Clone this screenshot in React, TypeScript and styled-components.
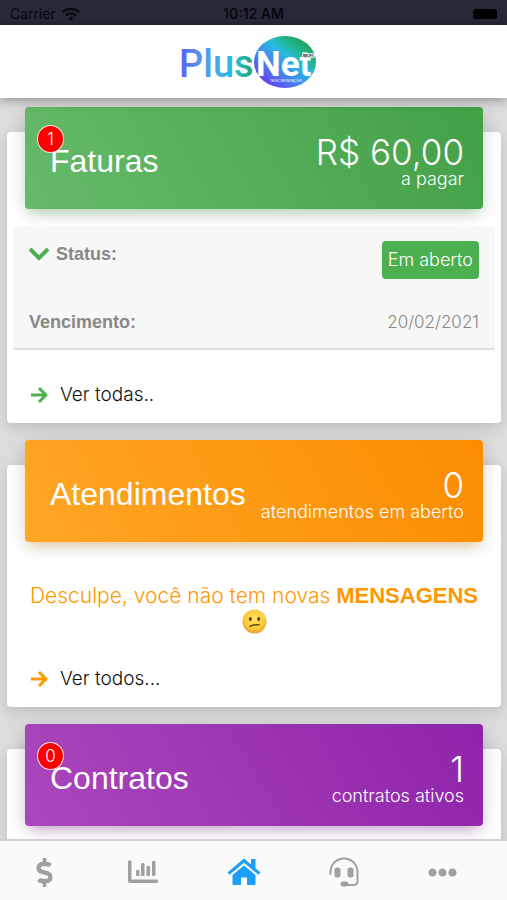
import React from "react";
import styled, { createGlobalStyle } from "styled-components";
import { FaDollarSign, FaEllipsisH, FaWifi } from "react-icons/fa";

const sans = `"Liberation Sans", Arial, sans-serif`;
const light = `Inter, "Liberation Sans", sans-serif`;

const GlobalStyle = createGlobalStyle`
  *, *::before, *::after { box-sizing: border-box; }
  body { margin: 0; font-family: ${sans}; background: #dcdcdc; }
  h1, h2, p, dl, dt, dd { margin: 0; font-weight: 400; }
  button { border: 0; background: none; padding: 0; font: inherit; cursor: pointer; }
`;

const Screen = styled.div`
  height: 100vh;
  display: flex;
  flex-direction: column;
  overflow: hidden;
`;

const StatusBar = styled.div`
  flex: none;
  height: 25px;
  padding: 2px 10px 0;
  display: grid;
  grid-template-columns: 1fr auto 1fr;
  align-items: center;
  background: #272838;
  color: #080810;
  font: 500 14px/16px Inter, sans-serif;
`;

const Carrier = styled.span`
  display: flex;
  align-items: center;
  gap: 6px;
  font-weight: 400;
`;

const Clock = styled.time`
  font-weight: 600;
`;

const Battery = styled.span`
  justify-self: end;
  width: 24px;
  height: 10px;
  border-radius: 3px;
  background: #000;
`;

const TopBar = styled.header`
  flex: none;
  position: relative;
  z-index: 2;
  height: 73px;
  display: flex;
  justify-content: center;
  align-items: center;
  background: #fff;
  box-shadow: 0 2px 10px rgba(0, 0, 0, 0.35);
`;

const Content = styled.main`
  flex: 1;
  min-height: 0;
  overflow: hidden;
  padding: 34px 6px 0 7px;
  display: flex;
  flex-direction: column;
  gap: 42px;
`;

const Card = styled.section`
  flex: none;
  padding-bottom: 8px;
  border-radius: 4px;
  background: #fff;
  box-shadow: 0 4px 14px rgba(0, 0, 0, 0.14);
`;

const tones = {
  green: { from: "#66bb6a", to: "#43a047", glow: "rgba(76, 175, 80, 0.35)", accent: "#4caf50" },
  orange: { from: "#ffa726", to: "#fb8c00", glow: "rgba(255, 152, 0, 0.35)", accent: "#ff9800" },
  purple: { from: "#ab47bc", to: "#8e24aa", glow: "rgba(156, 39, 176, 0.35)", accent: "#9c27b0" },
};
type Tone = keyof typeof tones;

const Banner = styled.div<{ $tone: Tone }>`
  position: relative;
  height: 102px;
  margin: -25px 18px 0;
  padding: 0 19px 0 25px;
  display: flex;
  justify-content: space-between;
  align-items: center;
  border-radius: 4px;
  color: #fff;
  background: linear-gradient(60deg, ${(p) => tones[p.$tone].from}, ${(p) => tones[p.$tone].to});
  box-shadow: 0 4px 20px rgba(0, 0, 0, 0.14), 0 7px 12px -5px ${(p) => tones[p.$tone].glow};
`;

const Title = styled.h2`
  padding-top: 6px;
  font-size: 32px;
  line-height: 36px;
`;

const Badge = styled.span`
  position: absolute;
  left: 12px;
  top: 18px;
  width: 27px;
  height: 28px;
  border: 1px solid #ffe0e0;
  border-radius: 50%;
  background: #f00;
  text-align: center;
  font: 300 17px/26px ${light};
`;

const Figure = styled.p`
  padding-top: 6px;
  text-align: right;
  font-family: ${light};
  font-weight: 300;
`;

const Amount = styled.strong`
  display: block;
  font-size: 35px;
  font-weight: 300;
  line-height: 36px;
`;

const Caption = styled.span`
  display: block;
  font-size: 18px;
  line-height: 18px;
`;

const Details = styled.dl`
  margin: 18px 6px 0;
  padding: 0 16px;
  border-bottom: 2px solid #dedede;
  background: #f7f7f7;
  color: #888;
`;

const DetailRow = styled.div<{ $tall?: boolean }>`
  min-height: ${(p) => (p.$tall ? "66px" : "55px")};
  padding-top: ${(p) => (p.$tall ? "14px" : "16px")};
  display: flex;
  justify-content: space-between;
  align-items: flex-start;
`;

const Term = styled.dt`
  display: flex;
  align-items: center;
  gap: 7px;
  font-size: 18px;
  font-weight: 700;
  line-height: 26px;
`;

const Value = styled.dd`
  font: 300 17px/26px ${light};
`;

const Pill = styled.span`
  display: block;
  padding: 6px;
  border-radius: 4px;
  background: #4caf50;
  color: #fff;
  font-size: 18px;
`;

const Notice = styled.p`
  padding: 40px 16px 0;
  text-align: center;
  color: #ff9800;
  font: 300 21px/27px ${light};

  strong {
    font-family: ${sans};
    font-size: 22px;
    font-weight: 700;
  }
`;

const Emoji = styled.svg`
  display: block;
  margin: 0 auto;
`;

const MoreLink = styled.a`
  height: 40px;
  margin: 25px 22px 0;
  display: flex;
  align-items: center;
  gap: 9px;
  color: #111;
  text-decoration: none;
  font: 300 19px/24px ${light};
`;

const TabBar = styled.nav`
  flex: none;
  position: relative;
  z-index: 2;
  height: 61px;
  padding: 3px 50px 0 30px;
  display: flex;
  justify-content: space-between;
  border-top: 2px solid #d0d0d0;
  background: #fafafa;
`;

const Tab = styled.button<{ $active?: boolean }>`
  display: flex;
  justify-content: center;
  align-items: center;
  color: ${(p) => (p.$active ? "#1a9ffa" : "#a0a0a0")};
`;

const Logo = () => (
  <svg width="150" height="54" viewBox="0 0 150 54" role="img" aria-label="PlusNet">
    <defs>
      <linearGradient id="plus" x1="0" y1="0" x2="1" y2="0">
        <stop offset="0" stopColor="#5560f0" />
        <stop offset="0.3" stopColor="#5898ee" />
        <stop offset="0.68" stopColor="#2bb9e4" />
        <stop offset="0.8" stopColor="#28bcc0" />
        <stop offset="1" stopColor="#1fa35b" />
      </linearGradient>
      <linearGradient id="globe" x1="0.15" y1="0.95" x2="0.9" y2="0.15">
        <stop offset="0" stopColor="#6a35f2" />
        <stop offset="0.3" stopColor="#4d78ee" />
        <stop offset="0.62" stopColor="#27bbe2" />
        <stop offset="0.8" stopColor="#20b58d" />
        <stop offset="1" stopColor="#1f9f55" />
      </linearGradient>
    </defs>
    <ellipse cx="106" cy="27" rx="31" ry="26" fill="url(#globe)" />
    <g fontFamily="Roboto, sans-serif">
      <text x="0" y="42" fontSize="38" fontWeight="500" fill="url(#plus)">Plus</text>
      <text x="77" y="41" fontSize="35" fontWeight="700" fill="#fff">Net</text>
    </g>
    <rect x="123" y="18" width="13" height="5" rx="2" fill="#ddd" />
    <text x="124" y="22" fontFamily="Liberation Sans, sans-serif" fontSize="4" fontWeight="700" fill="#333">WI-FI</text>
    <text x="91" y="47" fontFamily="Liberation Sans, sans-serif" fontSize="3" fill="#fff">TELECOMUNICAÇÕES</text>
  </svg>
);

const Chevron = () => (
  <svg width="20" height="14" viewBox="0 0 20 14" fill="none" stroke="#4caf50" strokeWidth="4" aria-hidden="true">
    <path d="M1 2l9 9 9-9" />
  </svg>
);

const Arrow = ({ tone }: { tone: Tone }) => (
  <svg width="22" height="20" viewBox="0 0 22 20" fill="none" stroke={tones[tone].accent} strokeWidth="3" strokeLinejoin="round" aria-hidden="true">
    <path d="M2 10h15M10 3l7 7-7 7" />
  </svg>
);

const Confused = () => (
  <Emoji width="25" height="25" viewBox="0 0 24 24" role="img" aria-label="rosto confuso">
    <defs>
      <radialGradient id="face" cx="0.5" cy="0.4" r="0.6">
        <stop offset="0" stopColor="#ffe658" />
        <stop offset="0.7" stopColor="#fbc93a" />
        <stop offset="1" stopColor="#ea9a24" />
      </radialGradient>
    </defs>
    <circle cx="12" cy="12" r="11.5" fill="url(#face)" />
    <ellipse cx="8" cy="9.5" rx="1.4" ry="1.9" fill="#5b3a0c" />
    <ellipse cx="16" cy="9.5" rx="1.4" ry="1.9" fill="#5b3a0c" />
    <path d="M7.5 16.7c2.5-1.5 5-1.9 9-1.5" fill="none" stroke="#6b430c" strokeWidth="1.3" strokeLinecap="round" />
  </Emoji>
);

const Chart = () => (
  <svg width="30" height="24" viewBox="0 0 30 24" fill="currentColor" aria-hidden="true">
    <path d="M0 1.500a1 1 0 0 1 1-1h1.500a1 1 0 0 1 1 1V19.500H29a1 1 0 0 1 1 1V22a1 1 0 0 1-1 1H2a2 2 0 0 1-2-2z" />
    <rect x="8" y="10" width="3.5" height="6" rx="1" />
    <rect x="13" y="3" width="3.5" height="13" rx="1" />
    <rect x="18.5" y="6" width="3.5" height="10" rx="1" />
    <rect x="24" y="1" width="3.5" height="15" rx="1" />
  </svg>
);

const House = () => (
  <svg width="34" height="28" viewBox="0 0 34 28" fill="currentColor" aria-hidden="true">
    <path d="M17 0.5L0.5 14.5l2 2.3L17 4.700l14.500 12.100 2-2.300-5-4.200V1h-4.500v5.500z" />
    <path d="M17 7.500L5.500 17v9q0 1 1 1h7.500v-7.500h6V27h7.500q1 0 1-1v-9z" />
  </svg>
);

const Headset = () => (
  <svg width="30" height="30" viewBox="0 0 30 30" fill="none" stroke="currentColor" strokeWidth="2" aria-hidden="true">
    <path d="M1.5 17v-2C1.5 7.3 7.5 1.5 15 1.5S28.5 7.3 28.5 15v9.5a3.5 3.5 0 0 1-3.5 3.5h-9" strokeLinecap="round" />
    <rect x="5.5" y="10.5" width="6" height="10" rx="2.5" fill="currentColor" stroke="none" />
    <rect x="18.5" y="10.5" width="6" height="10" rx="2.5" fill="currentColor" stroke="none" />
    <rect x="11.5" y="24.5" width="8" height="5" rx="2.5" fill="currentColor" stroke="none" />
  </svg>
);

interface BannerProps {
  tone: Tone;
  title: string;
  amount: string;
  caption: string;
  badge?: number;
}

const CardBanner = ({ tone, title, amount, caption, badge }: BannerProps) => (
  <Banner $tone={tone}>
    <Title>{title}</Title>
    {badge !== undefined && <Badge>{badge}</Badge>}
    <Figure>
      <Amount>{amount}</Amount>
      <Caption>{caption}</Caption>
    </Figure>
  </Banner>
);

export default function App() {
  return (
    <>
      <GlobalStyle />
      <Screen>
        <StatusBar>
          <Carrier>
            Carrier <FaWifi size={18} />
          </Carrier>
          <Clock>10:12 AM</Clock>
          <Battery />
        </StatusBar>
        <TopBar>
          <Logo />
        </TopBar>
        <Content>
          <Card>
            <CardBanner tone="green" title="Faturas" amount="R$ 60,00" caption="a pagar" badge={1} />
            <Details>
              <DetailRow $tall>
                <Term>
                  <Chevron />
                  Status:
                </Term>
                <Value>
                  <Pill>Em aberto</Pill>
                </Value>
              </DetailRow>
              <DetailRow>
                <Term>Vencimento:</Term>
                <Value>20/02/2021</Value>
              </DetailRow>
            </Details>
            <MoreLink href="#faturas">
              <Arrow tone="green" />
              Ver todas..
            </MoreLink>
          </Card>
          <Card>
            <CardBanner tone="orange" title="Atendimentos" amount="0" caption="atendimentos em aberto" />
            <Notice>
              Desculpe, você não tem novas <strong>MENSAGENS</strong>
              <Confused />
            </Notice>
            <MoreLink href="#atendimentos">
              <Arrow tone="orange" />
              Ver todos...
            </MoreLink>
          </Card>
          <Card>
            <CardBanner tone="purple" title="Contratos" amount="1" caption="contratos ativos" badge={0} />
            <Details />
          </Card>
        </Content>
        <TabBar>
          <Tab aria-label="Faturas"><FaDollarSign size={29} /></Tab>
          <Tab aria-label="Consumo"><Chart /></Tab>
          <Tab aria-label="Início" $active><House /></Tab>
          <Tab aria-label="Suporte"><Headset /></Tab>
          <Tab aria-label="Mais"><FaEllipsisH size={29} /></Tab>
        </TabBar>
      </Screen>
    </>
  );
}
